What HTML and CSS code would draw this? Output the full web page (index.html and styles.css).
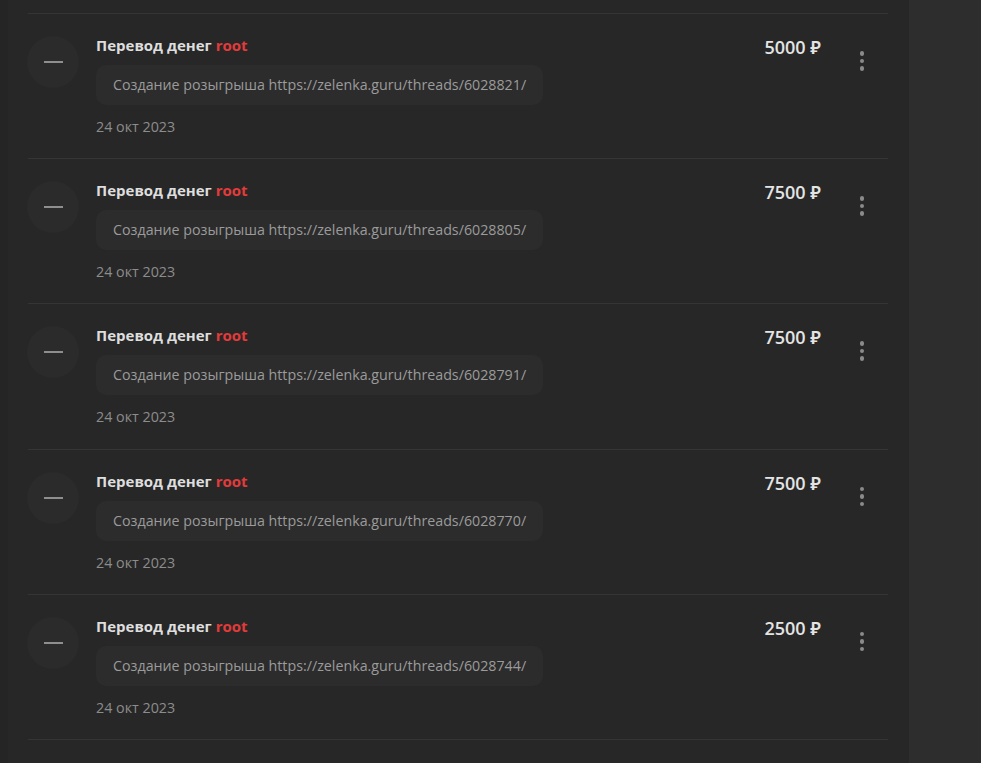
FILE: index.html
```html
<!DOCTYPE html>
<html lang="ru">
<head>
    <meta charset="UTF-8">
    <meta name="viewport" content="width=device-width, initial-scale=1.0">
    <title>Платежи</title>
    <link rel="stylesheet" href="styles.css">
</head>
<body>
    <div class="page">
        <div class="panel">
            <div class="payments">
                <div class="payment">
                    <div class="icon"><span></span></div>
                    <div class="info">
                        <div class="title">Перевод денег <span class="user">root</span></div>
                        <div class="comment">Создание розыгрыша https://zelenka.guru/threads/6028821/</div>
                        <div class="date">24 окт 2023</div>
                    </div>
                    <div class="amount">5000 ₽</div>
                    <div class="menu"><i></i><i></i><i></i></div>
                </div>
                <div class="payment">
                    <div class="icon"><span></span></div>
                    <div class="info">
                        <div class="title">Перевод денег <span class="user">root</span></div>
                        <div class="comment">Создание розыгрыша https://zelenka.guru/threads/6028805/</div>
                        <div class="date">24 окт 2023</div>
                    </div>
                    <div class="amount">7500 ₽</div>
                    <div class="menu"><i></i><i></i><i></i></div>
                </div>
                <div class="payment">
                    <div class="icon"><span></span></div>
                    <div class="info">
                        <div class="title">Перевод денег <span class="user">root</span></div>
                        <div class="comment">Создание розыгрыша https://zelenka.guru/threads/6028791/</div>
                        <div class="date">24 окт 2023</div>
                    </div>
                    <div class="amount">7500 ₽</div>
                    <div class="menu"><i></i><i></i><i></i></div>
                </div>
                <div class="payment">
                    <div class="icon"><span></span></div>
                    <div class="info">
                        <div class="title">Перевод денег <span class="user">root</span></div>
                        <div class="comment">Создание розыгрыша https://zelenka.guru/threads/6028770/</div>
                        <div class="date">24 окт 2023</div>
                    </div>
                    <div class="amount">7500 ₽</div>
                    <div class="menu"><i></i><i></i><i></i></div>
                </div>
                <div class="payment">
                    <div class="icon"><span></span></div>
                    <div class="info">
                        <div class="title">Перевод денег <span class="user">root</span></div>
                        <div class="comment">Создание розыгрыша https://zelenka.guru/threads/6028744/</div>
                        <div class="date">24 окт 2023</div>
                    </div>
                    <div class="amount">2500 ₽</div>
                    <div class="menu"><i></i><i></i><i></i></div>
                </div>
            </div>
        </div>
    </div>
</body>
</html>
```

FILE: styles.css
```css
body { margin: 0; background: #2d2d2d; font-family: "Open Sans", "Noto Sans", sans-serif; height: 763px; overflow: hidden; }
.page { padding-left: 8px; background: #252525; width: 901px; height: 763px; }
.panel { background: #272727; height: 100%; padding: 13px 21px 0 20px; box-sizing: border-box; }
.payments { border-top: 1px solid #353535; }
.payment { display: flex; align-items: flex-start; padding: 22px 0 22.2px; border-bottom: 1px solid #353535; }
.icon { width: 52px; height: 52px; border-radius: 50%; background: #2b2b2b; display: flex; align-items: center; justify-content: center; margin: 0 17px 0 -1px; flex-shrink: 0; }
.icon span { width: 19px; height: 2px; background: #8e8e8e; }
.info { flex: 1; }
.title { font-size: 15px; font-weight: 700; color: #dedede; line-height: 19px; }
.user { color: #e23b3b; }
.comment { display: inline-block; margin-top: 10px; padding: 10px 17px; line-height: 20px; font-size: 14.25px; color: #9b9b9b; background: #2c2c2c; border-radius: 10px; }
.date { margin-top: 13px; font-size: 14.3px; line-height: 18px; color: #8c8c8c; }
.amount { font-size: 18px; font-weight: 600; color: #e4e4e4; line-height: 22px; margin-top: 0; white-space: nowrap; }
.menu { width: 30px; margin: 15px 11px 0 26px; display: flex; flex-direction: column; align-items: center; gap: 3px; }
.menu i { width: 4.5px; height: 4.5px; border-radius: 50%; background: #8a8a8a; }
```
